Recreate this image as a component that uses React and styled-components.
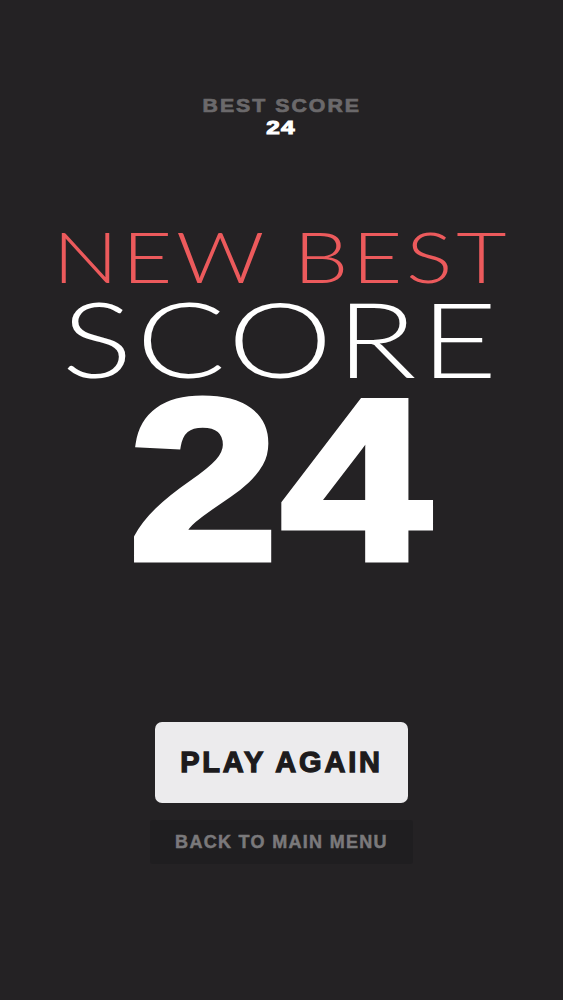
import React from "react";
import styled, { createGlobalStyle } from "styled-components";

const Global = createGlobalStyle`
  html, body { margin: 0; padding: 0; background: #242224; }
  #root { min-height: 1000px; }
`;

const Screen = styled.main`
  min-height: 1000px;
  display: flex;
  flex-direction: column;
  align-items: center;
  background: #242224;
  font-family: "Liberation Sans", Arial, sans-serif;
  box-sizing: border-box;
  padding-top: 96px;
`;

const BestBlock = styled.header`
  display: flex;
  flex-direction: column;
  align-items: center;
`;

const BestLabel = styled.div`
  font-size: 19px;
  line-height: 1;
  font-weight: 700;
  color: #6b696b;
  letter-spacing: 1.8px;
  transform: scaleX(1.12);
  -webkit-text-stroke: 0.7px #6b696b;
`;

const BestValue = styled.div`
  font-size: 18px;
  line-height: 1;
  font-weight: 700;
  color: #ffffff;
  margin-top: 4px;
  letter-spacing: 1px;
  transform: scaleX(1.35);
  -webkit-text-stroke: 1px #ffffff;
`;

const Title = styled.h1`
  margin: 0;
  margin-top: ${(p) => p.$top}px;
  font-family: "Lato", "Liberation Sans", sans-serif;
  font-weight: 300;
  font-size: ${(p) => p.$size}px;
  line-height: 0.75;
  letter-spacing: ${(p) => p.$spacing}px;
  color: ${(p) => p.$color};
  white-space: nowrap;
  transform: scaleX(${(p) => p.$scale});
`;

const Score = styled.div`
  margin-top: 19px;
  font-size: 229px;
  line-height: 0.75;
  font-weight: 700;
  color: #ffffff;
  transform: scaleX(1.17);
  letter-spacing: 3px;
  -webkit-text-stroke: 7px #ffffff;
`;

const Actions = styled.div`
  margin-top: 155px;
  display: flex;
  flex-direction: column;
  align-items: center;
  gap: 17px;
`;

const PrimaryButton = styled.button`
  width: 253px;
  height: 81px;
  border: none;
  border-radius: 7px;
  background: #ecebed;
  color: #1d1b1d;
  font-family: "Liberation Sans", Arial, sans-serif;
  font-weight: 700;
  font-size: 29px;
  letter-spacing: 2.8px;
  -webkit-text-stroke: 1.3px #1d1b1d;
  cursor: pointer;
`;

const SecondaryButton = styled.button`
  width: 263px;
  height: 44px;
  border: none;
  border-radius: 3px;
  background: #1f1e20;
  color: #7a797b;
  font-family: "Liberation Sans", Arial, sans-serif;
  font-weight: 700;
  font-size: 18px;
  letter-spacing: 1.3px;
  -webkit-text-stroke: 0.5px #7a797b;
  cursor: pointer;
`;

export default function App() {
  return (
    <>
      <Global />
      <Screen>
        <BestBlock>
          <BestLabel>BEST SCORE</BestLabel>
          <BestValue>24</BestValue>
        </BestBlock>
        <Title $top={93} $size={70} $spacing={3} $scale={1.24} $color="#ec5a5c">NEW BEST</Title>
        <Title $top={15} $size={105} $spacing={3} $scale={1.26} $color="#ffffff">SCORE</Title>
        <Score>24</Score>
        <Actions>
          <PrimaryButton>PLAY AGAIN</PrimaryButton>
          <SecondaryButton>BACK TO MAIN MENU</SecondaryButton>
        </Actions>
      </Screen>
    </>
  );
}
